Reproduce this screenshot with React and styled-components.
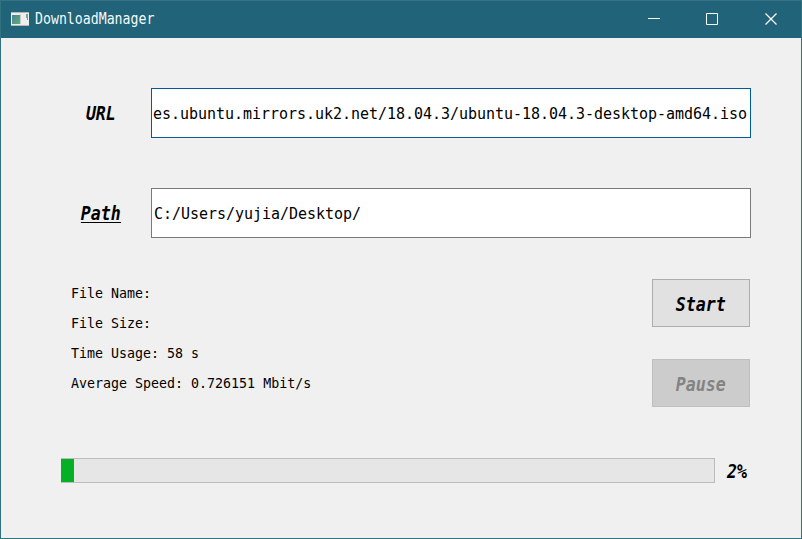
import React from "react";
import styled, { createGlobalStyle } from "styled-components";

const Global = createGlobalStyle`
  * { box-sizing: border-box; }
  html, body { margin: 0; background: #f0f0f0; overflow: hidden; }
  body { font-family: "DejaVu Sans Mono", monospace; color: #000; }
`;
const Window = styled.main`
  width: 802px;
  height: 539px;
  border: 1px solid #32727f;
  border-top-color: #377286;
  background: #f0f0f0;
`;
const TitleBar = styled.header`
  height: 37px;
  display: flex;
  align-items: center;
  padding-left: 10px;
  background: #216378;
`;
const AppIcon = styled.svg`
  display: block;
  flex: none;
  margin-bottom: 1px;
`;
const Title = styled.h1`
  flex: 1;
  margin: 0 0 1px 6px;
  font: 15.8px/20px "DejaVu Sans Mono", monospace;
  color: #f4fafb;
  transform: scaleX(0.837);
  transform-origin: left;
`;
const WindowButton = styled.button`
  width: ${(p) => p.$width || 58}px;
  height: 37px;
  padding: 0 0 2px;
  border: 0;
  background: none;
  display: grid;
  place-items: center;
  flex: none;
`;
const Content = styled.section`
  padding: 50px 50px 0;
`;
const Field = styled.div`
  display: grid;
  grid-template-columns: 100px 600px;
  height: 50px;
  margin-bottom: 50px;
`;
const Strong = styled.span`
  display: inline-block;
  font: italic bold 19.8px/24px "DejaVu Sans Mono", monospace;
  transform: scaleX(0.838);
  white-space: nowrap;
`;
const FieldLabel = styled.label`
  display: flex;
  align-items: flex-start;
  justify-content: center;
  padding-top: 14px;
`;
const Underlined = styled(Strong)`
  height: 21px;
  border-bottom: 1px solid #000;
`;
const Input = styled.input`
  width: 600px;
  height: 50px;
  padding: 1px ${(p) => (p.$focused ? "1px" : "2px")} 0;
  border: 1px solid ${(p) => (p.$focused ? "#005a9e" : "#7a7a7a")};
  border-radius: 0;
  outline: 0;
  background: #fff;
  color: #000;
  font: 15px "DejaVu Sans Mono", monospace;
  letter-spacing: -0.03px;
`;
const Middle = styled.div`
  display: flex;
  justify-content: space-between;
  height: 179px;
  margin-top: -9px;
  padding: 0 1px 0 20px;
`;
const Stats = styled.div`
  font-size: 13.3px;
  line-height: 30px;
  white-space: pre;
`;
const Actions = styled.div`
  display: flex;
  flex-direction: column;
  gap: 32px;
`;
const Action = styled.button`
  width: 98px;
  height: 48px;
  padding: 4px 1px 0 0;
  border: 1px solid #adadad;
  background: #e1e1e1;
  color: #000;
  display: flex;
  align-items: center;
  justify-content: center;
  &:disabled {
    background: #ccc;
    border-color: #bfbfbf;
    color: #838383;
  }
`;
const ProgressRow = styled.div`
  display: flex;
  align-items: center;
  height: 25px;
  padding-left: 10px;
`;
const Track = styled.div`
  width: 654px;
  height: 25px;
  border: 1px solid #bcbcbc;
  border-left: 0;
  background: #e6e6e6;
`;
const Fill = styled.div`
  height: 100%;
  background: #06b025;
`;
const Percent = styled.div`
  margin-left: 10px;
  padding-top: 2px;
`;

const details = ["File Name:", "File Size:", "Time Usage: 58 s", "Average Speed: 0.726151 Mbit/s"];

export default function App() {
  const percent = 2;
  return (
    <Window>
      <Global />
      <TitleBar>
        <AppIcon width="18" height="16" viewBox="0 0 18 16">
          <defs>
            <linearGradient id="pane" x1="0" y1="0" x2="1" y2="1">
              <stop offset="0" stopColor="#4d8299" />
              <stop offset="1" stopColor="#5eaf75" />
            </linearGradient>
          </defs>
          <path d="M0 1h18v14H0z" fill="#eeeeee" />
          <path d="M0 1h18v1H0zM0 14h18v1H0z" fill="#b5b5b8" />
          <path d="M1 4h8v9H1z" fill="url(#pane)" />
          <path d="M9 3h1v10H9z" fill="#c9cccc" />
          <path d="M15 3h2v6h-1V7h-1z" fill="#70a890" />
        </AppIcon>
        <Title>DownloadManager</Title>
        <WindowButton aria-label="Minimize">
          <svg width="12" height="12"><path d="M0 5.5h12" stroke="#fff" /></svg>
        </WindowButton>
        <WindowButton aria-label="Maximize">
          <svg width="12" height="12"><path d="M.5.5h11v11H.5z" fill="none" stroke="#fff" /></svg>
        </WindowButton>
        <WindowButton aria-label="Close" $width={60}>
          <svg width="12" height="12"><path d="m.5.5 11 11m0-11-11 11" stroke="#fff" strokeWidth="1.2" /></svg>
        </WindowButton>
      </TitleBar>
      <Content>
        <Field>
          <FieldLabel htmlFor="url"><Strong>URL</Strong></FieldLabel>
          <Input id="url" $focused readOnly value="es.ubuntu.mirrors.uk2.net/18.04.3/ubuntu-18.04.3-desktop-amd64.iso" />
        </Field>
        <Field>
          <FieldLabel htmlFor="path"><Underlined>Path</Underlined></FieldLabel>
          <Input id="path" readOnly value="C:/Users/yujia/Desktop/" />
        </Field>
        <Middle>
          <Stats>{details.map((line) => <div key={line}>{line}</div>)}</Stats>
          <Actions>
            <Action><Strong>Start</Strong></Action>
            <Action disabled><Strong>Pause</Strong></Action>
          </Actions>
        </Middle>
        <ProgressRow>
          <Track><Fill style={{ width: `${percent}%` }} /></Track>
          <Percent><Strong>{percent}%</Strong></Percent>
        </ProgressRow>
      </Content>
    </Window>
  );
}
